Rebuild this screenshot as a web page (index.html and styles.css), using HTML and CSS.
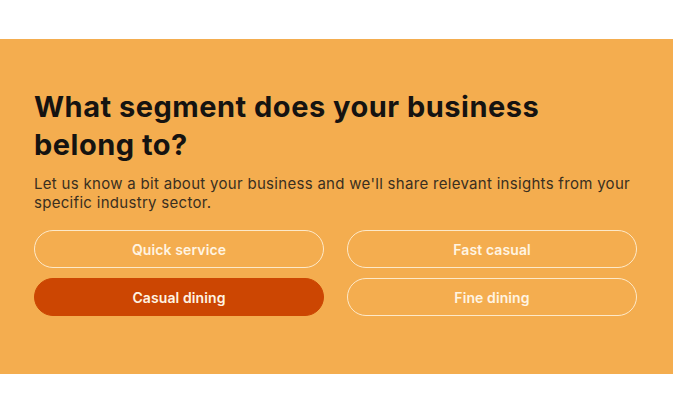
FILE: index.html
```html
<!DOCTYPE html>
<html lang="en">
<head>
<meta charset="utf-8">
<title>Segment</title>
<link rel="stylesheet" href="styles.css">
</head>
<body>
<main class="page">
  <section class="panel">
    <h1 class="title">What segment does your business belong to?</h1>
    <p class="lead">Let us know a bit about your business and we'll share relevant insights from your specific industry sector.</p>
    <div class="options">
      <button class="option">Quick service</button>
      <button class="option">Fast casual</button>
      <button class="option option--active">Casual dining</button>
      <button class="option">Fine dining</button>
    </div>
  </section>
</main>
</body>
</html>
```

FILE: styles.css
```css
* { box-sizing: border-box; }
html, body { margin: 0; padding: 0; background: #ffffff; }
body {
  width: 673px;
  height: 414px;
  overflow: hidden;
  font-family: Inter, "Noto Sans", sans-serif;
}
.page {
  padding-top: 39px;
}
.panel {
  background: #f4ad4f;
  height: 335px;
  padding: 49px 36px 0 34px;
}
.title {
  margin: 0;
  width: 560px;
  font-size: 29px;
  line-height: 38px;
  font-weight: 700;
  color: #151311;
  letter-spacing: 0.5px;
}
.lead {
  margin: 10px 0 0;
  font-size: 15px;
  line-height: 19px;
  color: #3a2f20;
  font-weight: 400;
  letter-spacing: 0.3px;
}
.options {
  margin-top: 18px;
  display: grid;
  grid-template-columns: 1fr 1fr;
  column-gap: 23px;
  row-gap: 10px;
}
.option {
  height: 38px;
  border: 1.5px solid #fde9c9;
  border-radius: 19px;
  background: transparent;
  color: #fff4e2;
  font-family: Inter, "Noto Sans", sans-serif;
  font-size: 14px;
  font-weight: 600;
  letter-spacing: 0.1px;
  padding: 0;
  cursor: pointer;
}
.option--active {
  background: #cc4602;
  border-color: #cc4602;
}
```
